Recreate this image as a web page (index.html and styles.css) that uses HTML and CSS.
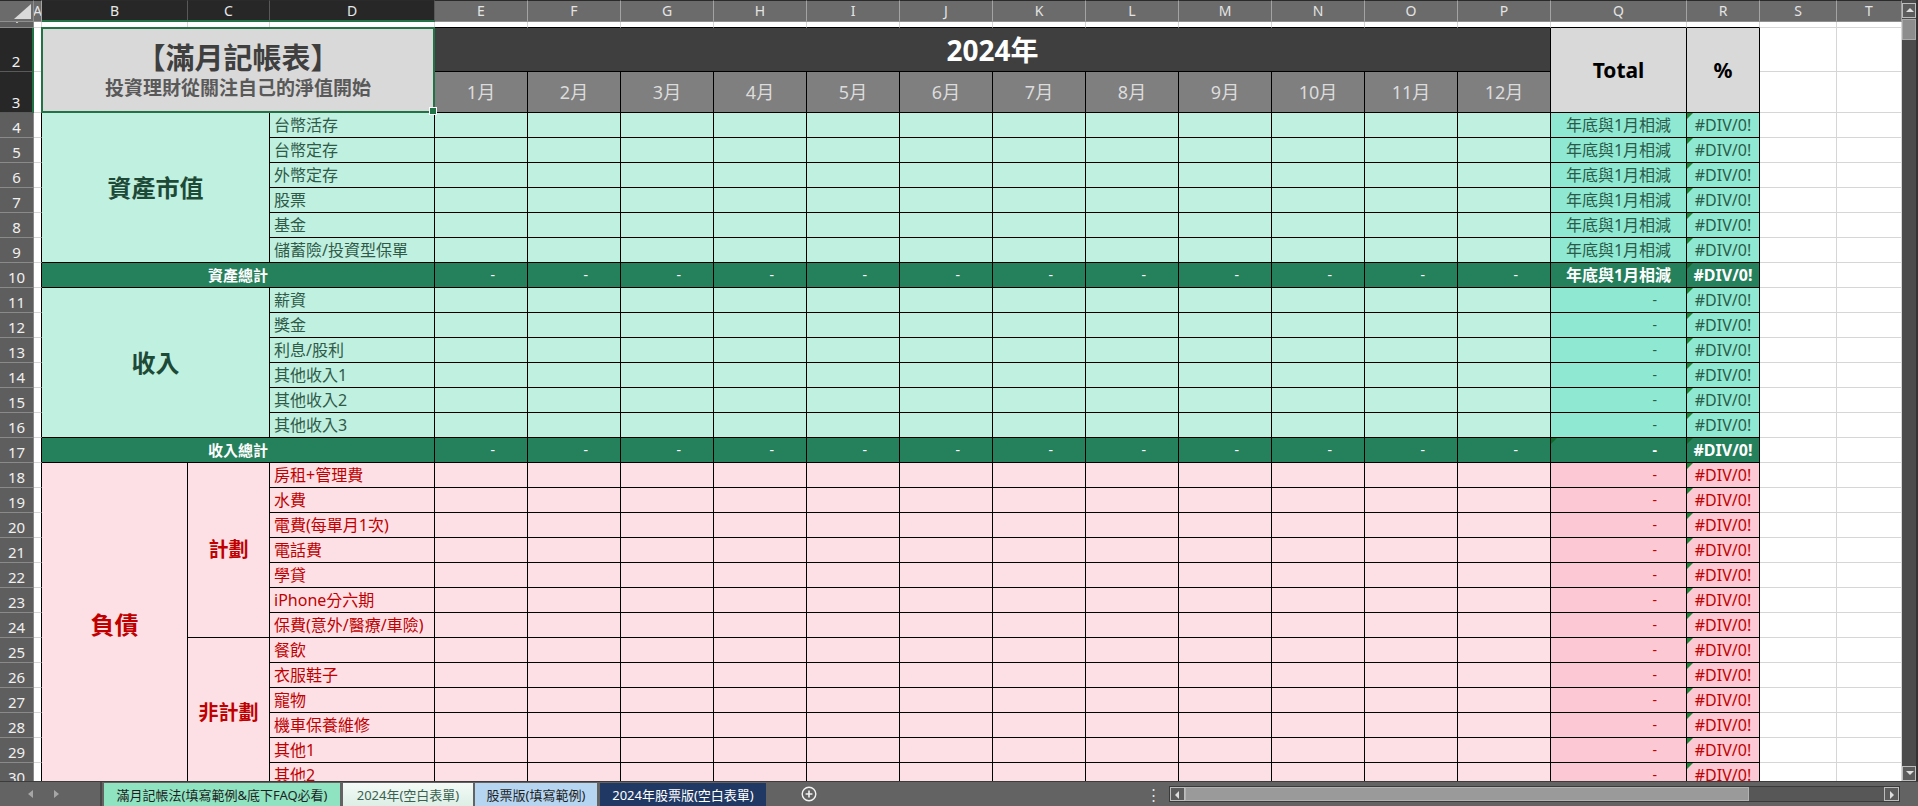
FILE: index.html
```html
<!DOCTYPE html>
<html lang="zh-Hant">
<head>
<meta charset="utf-8">
<title>2024年(空白表單)</title>
<link rel="stylesheet" href="styles.css">
</head>
<body>
<div class="app">
  <div class="workarea">
    <div class="viewport">
      <div class="sheet">
        <!-- column headers -->
        <div class="r hdr">
          <div class="corner"></div>
          <div class="ch">A</div><div class="ch sel">B</div><div class="ch sel">C</div><div class="ch sel">D</div>
          <div class="ch">E</div><div class="ch">F</div><div class="ch">G</div><div class="ch">H</div><div class="ch">I</div><div class="ch">J</div>
          <div class="ch">K</div><div class="ch">L</div><div class="ch">M</div><div class="ch">N</div><div class="ch">O</div><div class="ch">P</div>
          <div class="ch">Q</div><div class="ch">R</div><div class="ch">S</div><div class="ch">T</div>
        </div>

        <!-- row 1: spacer row -->
        <div class="r">
          <div class="rh">1</div><div class="g"></div>
          <div class="gt"></div><div class="gt"></div><div class="gt"></div>
          <div class="gt"></div><div class="gt"></div><div class="gt"></div><div class="gt"></div><div class="gt"></div><div class="gt"></div>
          <div class="gt"></div><div class="gt"></div><div class="gt"></div><div class="gt"></div><div class="gt"></div><div class="gt"></div>
          <div class="gt"></div><div class="gt"></div>
          <div class="g"></div><div class="g"></div>
        </div>

        <!-- rows 2-3: heading block -->
        <div class="r">
          <div class="rh sel">2</div><div class="a"></div>
          <div class="title cs3 rs2"><span class="t-main">【滿月記帳表】</span><span class="t-sub">投資理財從關注自己的淨值開始</span></div>
          <div class="year cs12">2024年</div>
          <div class="tot rs2">Total</div>
          <div class="tot rs2">%</div>
          <div class="g"></div><div class="g"></div>
        </div>
        <div class="r">
          <div class="rh sel">3</div><div class="a"></div>
          <div class="mon">1月</div><div class="mon">2月</div><div class="mon">3月</div><div class="mon">4月</div><div class="mon">5月</div><div class="mon">6月</div>
          <div class="mon">7月</div><div class="mon">8月</div><div class="mon">9月</div><div class="mon">10月</div><div class="mon">11月</div><div class="mon">12月</div>
          <div class="g"></div><div class="g"></div>
        </div>

        <!-- assets -->
        <div class="r as">
          <div class="rh">4</div><div class="a"></div>
          <div class="sec cs2 rs6">資產市值</div>
          <div class="lbl">台幣活存</div>
          <div></div><div></div><div></div><div></div><div></div><div></div><div></div><div></div><div></div><div></div><div></div><div></div>
          <div class="q">年底與1月相減</div><div class="p">#DIV/0!</div>
          <div class="g"></div><div class="g"></div>
        </div>
        <div class="r as">
          <div class="rh">5</div><div class="a"></div>
          <div class="lbl">台幣定存</div>
          <div></div><div></div><div></div><div></div><div></div><div></div><div></div><div></div><div></div><div></div><div></div><div></div>
          <div class="q">年底與1月相減</div><div class="p">#DIV/0!</div>
          <div class="g"></div><div class="g"></div>
        </div>
        <div class="r as">
          <div class="rh">6</div><div class="a"></div>
          <div class="lbl">外幣定存</div>
          <div></div><div></div><div></div><div></div><div></div><div></div><div></div><div></div><div></div><div></div><div></div><div></div>
          <div class="q">年底與1月相減</div><div class="p">#DIV/0!</div>
          <div class="g"></div><div class="g"></div>
        </div>
        <div class="r as">
          <div class="rh">7</div><div class="a"></div>
          <div class="lbl">股票</div>
          <div></div><div></div><div></div><div></div><div></div><div></div><div></div><div></div><div></div><div></div><div></div><div></div>
          <div class="q">年底與1月相減</div><div class="p">#DIV/0!</div>
          <div class="g"></div><div class="g"></div>
        </div>
        <div class="r as">
          <div class="rh">8</div><div class="a"></div>
          <div class="lbl">基金</div>
          <div></div><div></div><div></div><div></div><div></div><div></div><div></div><div></div><div></div><div></div><div></div><div></div>
          <div class="q">年底與1月相減</div><div class="p">#DIV/0!</div>
          <div class="g"></div><div class="g"></div>
        </div>
        <div class="r as">
          <div class="rh">9</div><div class="a"></div>
          <div class="lbl">儲蓄險/投資型保單</div>
          <div></div><div></div><div></div><div></div><div></div><div></div><div></div><div></div><div></div><div></div><div></div><div></div>
          <div class="q">年底與1月相減</div><div class="p">#DIV/0!</div>
          <div class="g"></div><div class="g"></div>
        </div>
        <div class="r sum">
          <div class="rh">10</div><div class="a"></div>
          <div class="sum-lbl cs3">資產總計</div>
          <div class="d">-</div><div class="d">-</div><div class="d">-</div><div class="d">-</div><div class="d">-</div><div class="d">-</div>
          <div class="d">-</div><div class="d">-</div><div class="d">-</div><div class="d">-</div><div class="d">-</div><div class="d">-</div>
          <div class="q">年底與1月相減</div><div class="p">#DIV/0!</div>
          <div class="g"></div><div class="g"></div>
        </div>

        <!-- income -->
        <div class="r as">
          <div class="rh">11</div><div class="a"></div>
          <div class="sec cs2 rs6">收入</div>
          <div class="lbl">薪資</div>
          <div></div><div></div><div></div><div></div><div></div><div></div><div></div><div></div><div></div><div></div><div></div><div></div>
          <div class="q qd">-</div><div class="p">#DIV/0!</div>
          <div class="g"></div><div class="g"></div>
        </div>
        <div class="r as">
          <div class="rh">12</div><div class="a"></div>
          <div class="lbl">獎金</div>
          <div></div><div></div><div></div><div></div><div></div><div></div><div></div><div></div><div></div><div></div><div></div><div></div>
          <div class="q qd">-</div><div class="p">#DIV/0!</div>
          <div class="g"></div><div class="g"></div>
        </div>
        <div class="r as">
          <div class="rh">13</div><div class="a"></div>
          <div class="lbl">利息/股利</div>
          <div></div><div></div><div></div><div></div><div></div><div></div><div></div><div></div><div></div><div></div><div></div><div></div>
          <div class="q qd">-</div><div class="p">#DIV/0!</div>
          <div class="g"></div><div class="g"></div>
        </div>
        <div class="r as">
          <div class="rh">14</div><div class="a"></div>
          <div class="lbl">其他收入1</div>
          <div></div><div></div><div></div><div></div><div></div><div></div><div></div><div></div><div></div><div></div><div></div><div></div>
          <div class="q qd">-</div><div class="p">#DIV/0!</div>
          <div class="g"></div><div class="g"></div>
        </div>
        <div class="r as">
          <div class="rh">15</div><div class="a"></div>
          <div class="lbl">其他收入2</div>
          <div></div><div></div><div></div><div></div><div></div><div></div><div></div><div></div><div></div><div></div><div></div><div></div>
          <div class="q qd">-</div><div class="p">#DIV/0!</div>
          <div class="g"></div><div class="g"></div>
        </div>
        <div class="r as">
          <div class="rh">16</div><div class="a"></div>
          <div class="lbl">其他收入3</div>
          <div></div><div></div><div></div><div></div><div></div><div></div><div></div><div></div><div></div><div></div><div></div><div></div>
          <div class="q qd">-</div><div class="p">#DIV/0!</div>
          <div class="g"></div><div class="g"></div>
        </div>
        <div class="r sum">
          <div class="rh">17</div><div class="a"></div>
          <div class="sum-lbl cs3">收入總計</div>
          <div class="d">-</div><div class="d">-</div><div class="d">-</div><div class="d">-</div><div class="d">-</div><div class="d">-</div>
          <div class="d">-</div><div class="d">-</div><div class="d">-</div><div class="d">-</div><div class="d">-</div><div class="d">-</div>
          <div class="q qd mark">-</div><div class="p">#DIV/0!</div>
          <div class="g"></div><div class="g"></div>
        </div>

        <!-- liabilities -->
        <div class="r li">
          <div class="rh">18</div><div class="a"></div>
          <div class="sec rs13">負債</div>
          <div class="sub rs7">計劃</div>
          <div class="lbl">房租+管理費</div>
          <div></div><div></div><div></div><div></div><div></div><div></div><div></div><div></div><div></div><div></div><div></div><div></div>
          <div class="q qd">-</div><div class="p">#DIV/0!</div>
          <div class="g"></div><div class="g"></div>
        </div>
        <div class="r li">
          <div class="rh">19</div><div class="a"></div>
          <div class="lbl">水費</div>
          <div></div><div></div><div></div><div></div><div></div><div></div><div></div><div></div><div></div><div></div><div></div><div></div>
          <div class="q qd">-</div><div class="p">#DIV/0!</div>
          <div class="g"></div><div class="g"></div>
        </div>
        <div class="r li">
          <div class="rh">20</div><div class="a"></div>
          <div class="lbl">電費(每單月1次)</div>
          <div></div><div></div><div></div><div></div><div></div><div></div><div></div><div></div><div></div><div></div><div></div><div></div>
          <div class="q qd">-</div><div class="p">#DIV/0!</div>
          <div class="g"></div><div class="g"></div>
        </div>
        <div class="r li">
          <div class="rh">21</div><div class="a"></div>
          <div class="lbl">電話費</div>
          <div></div><div></div><div></div><div></div><div></div><div></div><div></div><div></div><div></div><div></div><div></div><div></div>
          <div class="q qd">-</div><div class="p">#DIV/0!</div>
          <div class="g"></div><div class="g"></div>
        </div>
        <div class="r li">
          <div class="rh">22</div><div class="a"></div>
          <div class="lbl">學貸</div>
          <div></div><div></div><div></div><div></div><div></div><div></div><div></div><div></div><div></div><div></div><div></div><div></div>
          <div class="q qd">-</div><div class="p">#DIV/0!</div>
          <div class="g"></div><div class="g"></div>
        </div>
        <div class="r li">
          <div class="rh">23</div><div class="a"></div>
          <div class="lbl">iPhone分六期</div>
          <div></div><div></div><div></div><div></div><div></div><div></div><div></div><div></div><div></div><div></div><div></div><div></div>
          <div class="q qd">-</div><div class="p">#DIV/0!</div>
          <div class="g"></div><div class="g"></div>
        </div>
        <div class="r li">
          <div class="rh">24</div><div class="a"></div>
          <div class="lbl">保費(意外/醫療/車險)</div>
          <div></div><div></div><div></div><div></div><div></div><div></div><div></div><div></div><div></div><div></div><div></div><div></div>
          <div class="q qd">-</div><div class="p">#DIV/0!</div>
          <div class="g"></div><div class="g"></div>
        </div>
        <div class="r li">
          <div class="rh">25</div><div class="a"></div>
          <div class="sub rs6">非計劃</div>
          <div class="lbl">餐飲</div>
          <div></div><div></div><div></div><div></div><div></div><div></div><div></div><div></div><div></div><div></div><div></div><div></div>
          <div class="q qd">-</div><div class="p">#DIV/0!</div>
          <div class="g"></div><div class="g"></div>
        </div>
        <div class="r li">
          <div class="rh">26</div><div class="a"></div>
          <div class="lbl">衣服鞋子</div>
          <div></div><div></div><div></div><div></div><div></div><div></div><div></div><div></div><div></div><div></div><div></div><div></div>
          <div class="q qd">-</div><div class="p">#DIV/0!</div>
          <div class="g"></div><div class="g"></div>
        </div>
        <div class="r li">
          <div class="rh">27</div><div class="a"></div>
          <div class="lbl">寵物</div>
          <div></div><div></div><div></div><div></div><div></div><div></div><div></div><div></div><div></div><div></div><div></div><div></div>
          <div class="q qd">-</div><div class="p">#DIV/0!</div>
          <div class="g"></div><div class="g"></div>
        </div>
        <div class="r li">
          <div class="rh">28</div><div class="a"></div>
          <div class="lbl">機車保養維修</div>
          <div></div><div></div><div></div><div></div><div></div><div></div><div></div><div></div><div></div><div></div><div></div><div></div>
          <div class="q qd">-</div><div class="p">#DIV/0!</div>
          <div class="g"></div><div class="g"></div>
        </div>
        <div class="r li">
          <div class="rh">29</div><div class="a"></div>
          <div class="lbl">其他1</div>
          <div></div><div></div><div></div><div></div><div></div><div></div><div></div><div></div><div></div><div></div><div></div><div></div>
          <div class="q qd">-</div><div class="p">#DIV/0!</div>
          <div class="g"></div><div class="g"></div>
        </div>
        <div class="r li">
          <div class="rh">30</div><div class="a"></div>
          <div class="lbl">其他2</div>
          <div></div><div></div><div></div><div></div><div></div><div></div><div></div><div></div><div></div><div></div><div></div><div></div>
          <div class="q qd">-</div><div class="p">#DIV/0!</div>
          <div class="g"></div><div class="g"></div>
        </div>
      </div>
    </div>

    <div class="vscroll">
      <div class="vbtn up"></div>
      <div class="vthumb"></div>
      <div class="vtrack"></div>
      <div class="vbtn down"></div>
    </div>
  </div>

  <div class="tabbar">
    <div class="nav"><span class="arr left"></span><span class="arr right"></span></div>
    <div class="tab tab-guide">滿月記帳法(填寫範例&amp;底下FAQ必看)</div>
    <div class="tab tab-blank">2024年(空白表單)</div>
    <div class="tab tab-stock">股票版(填寫範例)</div>
    <div class="tab tab-stock-blank">2024年股票版(空白表單)</div>
    <div class="add">
      <svg width="16" height="16" viewBox="0 0 16 16"><circle cx="8" cy="8" r="6.8" fill="none" stroke="#f2f2f2" stroke-width="1.4"/><path d="M8 4.6v6.8M4.6 8h6.8" stroke="#f2f2f2" stroke-width="1.6"/></svg>
    </div>
    <div class="more">⋮</div>
    <div class="hscroll">
      <div class="hbtn left"></div>
      <div class="hthumb"></div>
      <div class="htrack"></div>
      <div class="hbtn right"></div>
    </div>
  </div>
</div>
</body>
</html>
```

FILE: styles.css
```css
* { box-sizing: border-box; }

html, body {
  margin: 0;
  padding: 0;
}

body {
  width: 1918px;
  height: 806px;
  overflow: hidden;
  background: #636363;
  font-family: "Noto Sans", "Noto Sans CJK TC", sans-serif;
}

.app {
  display: flex;
  flex-direction: column;
  height: 806px;
}

.workarea {
  display: flex;
  height: 781px;
}

.viewport {
  width: 1902px;
  height: 781px;
  overflow: hidden;
  background: #fff;
}

/* spreadsheet grid */
.sheet {
  display: grid;
  grid-template-columns: 34px 8px 146px 82px 165px repeat(12, 93px) 136px 73px 77px 65px;
  grid-template-rows: 22px 6px 44px 41px repeat(27, 25px);
}

.r { display: contents; }

.r > div {
  border-right: 1px solid #000;
  border-bottom: 1px solid #000;
  display: flex;
  align-items: center;
  justify-content: center;
  overflow: hidden;
  white-space: nowrap;
  min-width: 0;
  font-size: 16px;
  line-height: 20px;
}

/* spans for merged cells */
.r > .cs2 { grid-column: span 2; }
.r > .cs3 { grid-column: span 3; }
.r > .cs12 { grid-column: span 12; }
.r > .rs2 { grid-row: span 2; }
.r > .rs6 { grid-row: span 6; }
.r > .rs7 { grid-row: span 7; }
.r > .rs13 { grid-row: span 13; }

/* headers */
.hdr > .corner {
  position: relative;
  background: #6b6b6b;
  border-right: 1px solid #8f8f8f;
  border-bottom: 1px solid #8f8f8f;
  border-top: 1px solid #2a2a2a;
}
.hdr > .corner::after {
  content: "";
  position: absolute;
  right: 2px;
  bottom: 2px;
  width: 17px;
  height: 15px;
  background: #d9d9d9;
  clip-path: polygon(100% 0, 100% 100%, 0 100%);
}

.r > .ch {
  background: #6b6b6b;
  color: #e4e4e4;
  border-top: 1px solid #2a2a2a;
  border-right: 1px solid #a3a3a3;
  border-bottom: 1px solid #8f8f8f;
  font-size: 14px;
  line-height: 18px;
}
.r > .ch.sel {
  background: #272727;
  color: #e8e8e8;
  border-right-color: #585858;
  border-bottom: 2px solid #217346;
}

.r > .rh {
  background: #5e5e5e;
  color: #f0f0f0;
  border-right: 1px solid #8a8a8a;
  border-bottom: 1px solid #8a8a8a;
  align-items: flex-end;
  padding-bottom: 1px;
  font-size: 15px;
  line-height: 18px;
}
.r > .rh.sel {
  background: #272727;
  border-bottom-color: #5a5a5a;
  border-right: 2px solid #217346;
}

/* plain gridline cells */
.r > .g {
  background: #fff;
  border-right: 1px solid #d6d6d6;
  border-bottom: 1px solid #d6d6d6;
}
.r > .gt {
  background: #fff;
  border-right: 1px solid #d6d6d6;
  border-bottom: 1px solid #000;
}
.r > .a {
  background: #fff;
  border-bottom: 1px solid #d6d6d6;
}

/* heading block */
.r > .title {
  position: relative;
  overflow: visible;
  background: #d9d9d9;
  flex-direction: column;
  z-index: 1;
}
.r > .title::after {
  content: "";
  position: absolute;
  left: -1px;
  top: -1px;
  right: -1px;
  bottom: -1px;
  border: 2px solid #217346;
}
.r > .title::before {
  content: "";
  position: absolute;
  right: -3px;
  bottom: -3px;
  width: 6px;
  height: 6px;
  background: #217346;
  border: 1px solid #fff;
  z-index: 2;
}
.t-main {
  font-size: 29px;
  line-height: 36px;
  font-weight: 700;
  color: #3f3f3f;
}
.t-sub {
  font-size: 19px;
  line-height: 24px;
  font-weight: 700;
  color: #595959;
}

.r > .year {
  background: #3f3f3f;
  color: #fff;
  font-size: 28px;
  line-height: 34px;
  font-weight: 700;
}
.r > .mon {
  background: #7f7f7f;
  color: #dcdcdc;
  font-size: 18px;
  line-height: 24px;
}
.r > .tot {
  background: #d9d9d9;
  color: #000;
  font-size: 21px;
  line-height: 28px;
  font-weight: 700;
}

/* section fills */
.as > div { background: #c0f0df; color: #2f5a48; }
.li > div { background: #fde0e6; color: #c00000; }
.sum > div { background: #25805c; color: #fff; }

.r > .sec {
  font-size: 24px;
  line-height: 30px;
  font-weight: 700;
}
.as > .sec { color: #1d4a37; }
.r > .sub {
  font-size: 20px;
  line-height: 26px;
  font-weight: 700;
}

.r > .lbl {
  justify-content: flex-start;
  padding-left: 4px;
}

.r > .sum-lbl {
  font-size: 15px;
  font-weight: 700;
}

.r > .d {
  justify-content: flex-end;
  padding-right: 32px;
  font-size: 14px;
}

/* Total and percent columns */
.as > .q, .as > .p { background: #8fe9d2; color: #2b5a48; }
.li > .q, .li > .p { background: #fbc8d3; color: #c00000; }
.sum > .q, .sum > .p { font-weight: 700; }

.r > .qd {
  justify-content: flex-end;
  padding-right: 29px;
  font-size: 14px;
}

.r > .p,
.r > .mark {
  position: relative;
}
.r > .p::before,
.r > .mark::before {
  content: "";
  position: absolute;
  left: 0;
  top: 0;
  border-top: 6px solid #1a8a33;
  border-right: 6px solid transparent;
}
.sum > .mark::before,
.sum > .p::before { border-top-color: #0f6b2c; }

/* vertical scrollbar */
.vscroll {
  width: 16px;
  height: 781px;
  background: #4b4b4b;
  border-right: 2px solid #333;
  display: flex;
  flex-direction: column;
  padding-top: 3px;
}
.vbtn {
  height: 15px;
  flex: none;
  position: relative;
  background: #5c5c5c;
  border: 1px solid #bdbdbd;
}
.vbtn::after {
  content: "";
  position: absolute;
  left: 3px;
  border-left: 4px solid transparent;
  border-right: 4px solid transparent;
}
.vbtn.up::after { top: 4px; border-bottom: 4px solid #dedede; }
.vbtn.down::after { top: 4px; border-top: 4px solid #dedede; }
.vthumb {
  height: 21px;
  flex: none;
  background: #8d8d8d;
  border: 1px solid #a9a9a9;
  margin-top: 1px;
}
.vtrack { flex: 1; }

/* sheet tabs bar */
.tabbar {
  height: 25px;
  display: flex;
  align-items: flex-end;
  background: #636363;
  border-top: 1px solid #3c3c3c;
  font-size: 13px;
}
.nav {
  width: 102px;
  height: 24px;
  flex: none;
  display: flex;
  align-items: center;
  padding-left: 28px;
  gap: 21px;
  border-right: 2px solid #474747;
}
.arr {
  width: 0;
  height: 0;
  border-top: 4px solid transparent;
  border-bottom: 4px solid transparent;
}
.arr.left { border-right: 5px solid #a6a6a6; }
.arr.right { border-left: 5px solid #a6a6a6; }

.tab {
  height: 23px;
  flex: none;
  display: flex;
  align-items: center;
  justify-content: center;
  white-space: nowrap;
  line-height: 18px;
  color: #1f1f1f;
}
.tab-guide {
  width: 236px;
  margin-left: 2px;
  background: #8fe3c1;
}
.tab-blank {
  width: 130px;
  margin-left: 3px;
  background: linear-gradient(#f4faf7, #dcefe5);
  color: #3a6150;
}
.tab-stock {
  width: 122px;
  margin-left: 2px;
  background: #b6d5f0;
}
.tab-stock-blank {
  width: 166px;
  margin-left: 3px;
  background: #203864;
  color: #fff;
}
.add {
  width: 16px;
  height: 24px;
  flex: none;
  margin-left: 35px;
  display: flex;
  align-items: center;
}
.more {
  width: 16px;
  height: 24px;
  flex: none;
  margin-left: auto;
  display: flex;
  align-items: center;
  justify-content: center;
  color: #e6e6e6;
  font-size: 15px;
}
.hscroll {
  width: 731px;
  height: 16px;
  flex: none;
  margin: 0 18px 4px 8px;
  display: flex;
  background: #575757;
  border: 1px solid #3a3a3a;
}
.hbtn {
  width: 15px;
  flex: none;
  position: relative;
  background: #5c5c5c;
  border: 1px solid #bdbdbd;
}
.hbtn::after {
  content: "";
  position: absolute;
  top: 3px;
  border-top: 4px solid transparent;
  border-bottom: 4px solid transparent;
}
.hbtn.left::after { left: 4px; border-right: 4px solid #dedede; }
.hbtn.right::after { left: 5px; border-left: 4px solid #dedede; }
.hthumb {
  width: 564px;
  flex: none;
  background: #9a9a9a;
  border: 1px solid #b3b3b3;
}
.htrack { flex: 1; }
```
